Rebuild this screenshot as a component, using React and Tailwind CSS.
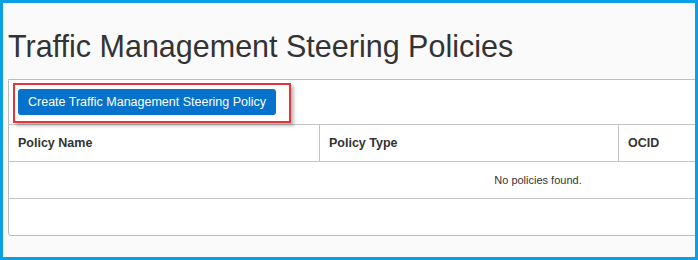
import React from "react";

const columns = [
  { label: "Policy Name", width: "w-[311px] border-r" },
  { label: "Policy Type", width: "w-[299px] border-r" },
  { label: "OCID", width: "flex-1" },
];

const SteeringPolicies = () => {
  return (
    <div className="w-[698px] h-[260px] border-[3px] border-[#0aa0e6] bg-[#fafafa] overflow-hidden font-['Liberation_Sans',Arial,sans-serif] text-[#333]">
      <div className="pl-[5px] pt-[25px]">
        <h1 className="text-[30.5px] leading-[36px] text-[#333] whitespace-nowrap">
          Traffic Management Steering Policies
        </h1>

        <div className="mt-[15px] w-[1060px] bg-white border border-[#bdbdbd] rounded-b-[3px]">
          {/* toolbar */}
          <div className="pt-[3px] pl-[4px] pb-[1px]">
            <div className="inline-block border-2 border-[#e8333b] pt-[4px] pl-[3px] pr-[13px] pb-[6px] shadow-[3px_3px_3px_rgba(0,0,0,0.25)]">
              <button className="h-[26px] px-[10px] bg-[#0672cb] rounded-[3px] text-white text-[12.5px] whitespace-nowrap">
                Create Traffic Management Steering Policy
              </button>
            </div>
          </div>

          {/* header */}
          <div className="flex border-t border-[#c4c4c4]">
            {columns.map((col) => (
              <div
                key={col.label}
                className={`h-[36px] flex items-center pl-[9px] border-[#c4c4c4] text-[12.5px] font-semibold text-[#333] ${col.width}`}
              >
                {col.label}
              </div>
            ))}
          </div>

          <div className="h-[37px] border-t border-[#c4c4c4] flex items-center justify-center text-[11px] text-[#333]">
            No policies found.
          </div>
          <div className="h-[37px] border-t border-[#c4c4c4]"></div>
        </div>
      </div>
    </div>
  );
};

export default SteeringPolicies;
